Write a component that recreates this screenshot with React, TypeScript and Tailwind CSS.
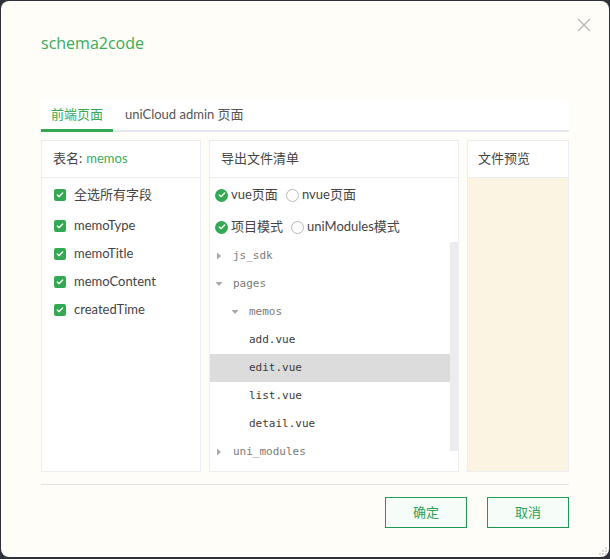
import { Check } from 'lucide-react';

const fields = ['memoType', 'memoTitle', 'memoContent', 'createdTime'];

const tree = [
  { name: 'js_sdk', level: 0, arrow: 'right', folder: true },
  { name: 'pages', level: 0, arrow: 'down', folder: true },
  { name: 'memos', level: 1, arrow: 'down', folder: true },
  { name: 'add.vue', level: 2, arrow: '', folder: false },
  { name: 'edit.vue', level: 2, arrow: '', folder: false, selected: true },
  { name: 'list.vue', level: 2, arrow: '', folder: false },
  { name: 'detail.vue', level: 2, arrow: '', folder: false },
  { name: 'uni_modules', level: 0, arrow: 'right', folder: true },
];

function CheckBox() {
  return (
    <span className="w-[12px] h-[12px] rounded-[2px] bg-[#35a853] flex items-center justify-center shrink-0">
      <Check size={8} strokeWidth={4} className="text-white" />
    </span>
  );
}

function Radio({ on }: { on: boolean }) {
  return on ? (
    <span className="w-[13px] h-[13px] rounded-full bg-[#35a853] flex items-center justify-center shrink-0">
      <Check size={8} strokeWidth={4} className="text-white" />
    </span>
  ) : (
    <span className="w-[13px] h-[13px] rounded-full border border-[#b8b8b8] bg-white shrink-0" />
  );
}

function Arrow({ dir }: { dir: string }) {
  if (dir === 'right')
    return (
      <svg width="8" height="8" viewBox="0 0 8 8" className="shrink-0">
        <path d="M2 0.5 L6 4 L2 7.5 Z" fill="#a8a8a8" />
      </svg>
    );
  return (
    <svg width="8" height="8" viewBox="0 0 8 8" className="shrink-0">
      <path d="M0.5 2 L7.5 2 L4 6 Z" fill="#a8a8a8" />
    </svg>
  );
}

export default function App() {
  return (
    <div
      className="w-[610px] h-[559px] bg-[#2e3238] pt-[1px] pl-[1px] overflow-hidden"
      style={{ fontFamily: 'Lato, "Noto Sans CJK SC", sans-serif' }}
    >
      <div className="relative w-[608px] h-[556px] rounded-[8px] bg-[#fffdf8] px-[40px]">
        {/* Close */}
        <svg width="14" height="14" viewBox="0 0 14 14" className="absolute left-[576px] top-[17px]">
          <path d="M1 1 L13 13 M13 1 L1 13" stroke="#b4b4b4" strokeWidth="1.1" />
        </svg>

        {/* Title */}
        <div
          className="pt-[31px] text-[16px] leading-[22px] text-[#3aab5a]"
          style={{ fontFamily: '"Open Sans", sans-serif' }}
        >
          schema2code
        </div>

        {/* Tabs */}
        <div className="relative mt-[46px] h-[32px] bg-white border-b-2 border-[#e4e7ed] flex items-center text-[13px]">
          <div className="relative w-[72px] h-full flex items-center justify-center text-[#35a853]">
            前端页面
            <span className="absolute left-0 right-0 bottom-[-2px] h-[3px] bg-[#35a853]" />
          </div>
          <div className="ml-[12px] text-[#555]">uniCloud admin 页面</div>
        </div>

        {/* Panels */}
        <div className="mt-[8px] h-[332px] flex gap-2">
          {/* Left */}
          <div className="w-[160px] h-full border border-[#ebedf0] bg-white flex flex-col">
            <div className="h-[37px] border-b border-[#ebedf0] px-[11px] flex items-center text-[13px] text-[#444]">
              表名: <span className="ml-[4px] text-[#3aab5a]">memos</span>
            </div>
            <div className="pt-[3px] text-[13px] text-[#444]">
              <div className="h-[28px] pl-[12px] flex items-center gap-[8px]">
                <CheckBox />
                全选所有字段
              </div>
              <div className="mt-[3px]">
                {fields.map((f) => (
                  <div key={f} className="h-[28px] pl-[12px] flex items-center gap-[8px]">
                    <CheckBox />
                    {f}
                  </div>
                ))}
              </div>
            </div>
          </div>

          {/* Middle */}
          <div className="w-[250px] h-full border border-[#ebedf0] bg-white flex flex-col">
            <div className="h-[37px] border-b border-[#ebedf0] px-[11px] flex items-center text-[13px] text-[#444]">
              导出文件清单
            </div>
            <div className="pt-[3px] text-[13px] text-[#444]">
              <div className="h-[28px] pl-[5px] flex items-center">
                <div className="w-[71px] flex items-center gap-[3px]">
                  <Radio on />
                  vue页面
                </div>
                <div className="flex items-center gap-[3px]">
                  <Radio on={false} />
                  nvue页面
                </div>
              </div>
              <div className="mt-[4px] h-[28px] pl-[5px] flex items-center">
                <div className="w-[76px] flex items-center gap-[3px]">
                  <Radio on />
                  项目模式
                </div>
                <div className="flex items-center gap-[3px]">
                  <Radio on={false} />
                  uniModules模式
                </div>
              </div>
            </div>
            <div className="flex flex-1 min-h-0 mt-[1px]">
              <div
                className="w-[240px] text-[11px]"
                style={{ fontFamily: '"DejaVu Sans Mono", "Liberation Mono", monospace' }}
              >
                {tree.map((t) => (
                  <div
                    key={t.name}
                    className={`h-[28px] flex items-center ${t.selected ? 'bg-[#dcdcdc]' : ''} ${
                      t.folder ? 'text-[#7a7a7a]' : 'text-[#3b3b3b]'
                    } ${t.level === 0 ? 'pl-[5px]' : t.level === 1 ? 'pl-[21px]' : 'pl-[39px]'}`}
                  >
                    {t.arrow && <Arrow dir={t.arrow} />}
                    <span className={t.arrow ? 'ml-[10px]' : ''}>{t.name}</span>
                  </div>
                ))}
              </div>
              <div className="w-[8px] h-[209px] bg-[#ececec]" />
            </div>
          </div>

          {/* Right */}
          <div className="flex-1 h-full border border-[#ebedf0] flex flex-col">
            <div className="h-[37px] bg-white border-b border-[#ebedf0] px-[10px] flex items-center text-[13px] text-[#444]">
              文件预览
            </div>
            <div className="flex-1 bg-[#fbf4e2]" />
          </div>
        </div>

        {/* Footer */}
        <div className="mt-[12px] border-t border-[#e2e2e2] pt-[12px] flex justify-end gap-5">
          <button className="w-[82px] h-[31px] border border-[#1f9a52] bg-[#f6fdf8] text-[13px] text-[#2f9e55]">
            确定
          </button>
          <button className="w-[82px] h-[31px] border border-[#1f9a52] bg-[#f6fdf8] text-[13px] text-[#2f9e55]">
            取消
          </button>
        </div>

        {/* Resize grip */}
        <svg width="9" height="9" viewBox="0 0 9 9" className="absolute right-[1px] bottom-[1px]">
          <rect x="6" y="0" width="2" height="2" fill="#d6d6d6" />
          <rect x="3" y="3" width="2" height="2" fill="#d6d6d6" />
          <rect x="6" y="3" width="2" height="2" fill="#d6d6d6" />
          <rect x="0" y="6" width="2" height="2" fill="#d6d6d6" />
          <rect x="3" y="6" width="2" height="2" fill="#d6d6d6" />
          <rect x="6" y="6" width="2" height="2" fill="#d6d6d6" />
        </svg>
      </div>
    </div>
  );
}
